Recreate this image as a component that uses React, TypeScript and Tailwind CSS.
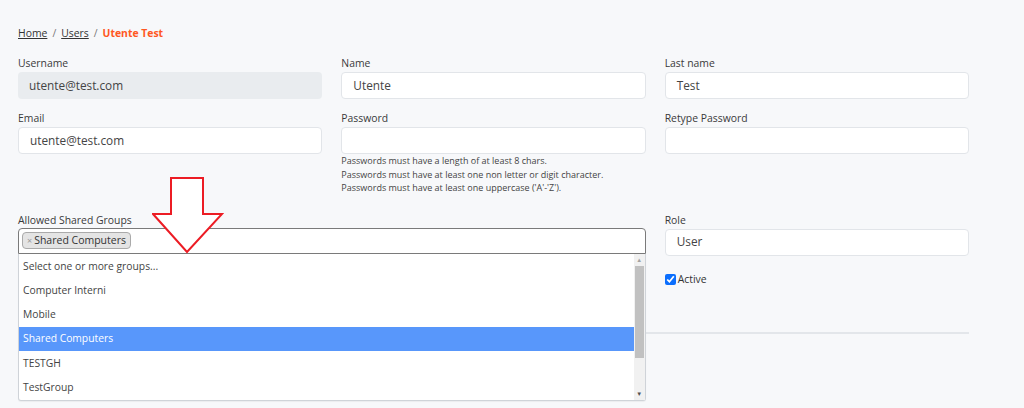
import React from "react";

const groups = ["Select one or more groups...", "Computer Interni", "Mobile", "Shared Computers", "TESTGH", "TestGroup"];

function Campo({ label, value, grigio }: { label: string; value?: string; grigio?: boolean }) {
  return (
    <div className="flex flex-col">
      <label className="text-[10.4px] leading-[14px] text-[#3a3a3a] mb-[2px]">{label}</label>
      <div
        className={
          "h-[27px] rounded-[4px] px-[11px] flex items-center text-[11.8px] text-[#444] " +
          (grigio ? "bg-[#e9ecef]" : "bg-white border border-[#e2e5e9]")
        }
      >
        {value}
      </div>
    </div>
  );
}

function Freccia() {
  return (
    <svg className="absolute left-[152px] top-[177px]" width="72" height="78" viewBox="0 0 72 78">
      <polygon points="19,1 51,1 51,37 70,37 35,75 1,37 19,37" fill="white" stroke="#ec1c24" strokeWidth="2" />
    </svg>
  );
}

export default function App() {
  return (
    <div className="relative h-[408px] w-full overflow-hidden bg-[#f7f8fa] font-['Open_Sans',sans-serif]">
      <div className="w-[951px] ml-[18px] pt-[26px]">
        <nav className="text-[10.4px] leading-[14px] text-[#333] flex gap-[5px]">
          <span className="underline">Home</span>
          <span className="text-[#777]">/</span>
          <span className="underline">Users</span>
          <span className="text-[#777]">/</span>
          <span className="font-bold text-[#ff5722]">Utente Test</span>
        </nav>

        <div className="grid grid-cols-3 gap-x-[19px] mt-[16px]">
          <Campo label="Username" value="utente@test.com" grigio />
          <Campo label="Name" value="Utente" />
          <Campo label="Last name" value="Test" />
        </div>

        <div className="grid grid-cols-3 gap-x-[19px] mt-[12px]">
          <Campo label="Email" value="utente@test.com" />
          <div className="flex flex-col">
            <Campo label="Password" />
            <div className="text-[9px] leading-[13.5px] text-[#444]">
              <p>Passwords must have a length of at least 8 chars.</p>
              <p>Passwords must have at least one non letter or digit character.</p>
              <p>Passwords must have at least one uppercase ('A'-'Z').</p>
            </div>
          </div>
          <Campo label="Retype Password" />
        </div>

        <div className="grid grid-cols-3 gap-x-[19px] mt-[18px]">
          <div className="col-span-2 flex flex-col relative">
            <label className="text-[10.4px] leading-[14px] text-[#3a3a3a] mb-[1px]">Allowed Shared Groups</label>
            <div className="h-[26px] bg-white border border-[#7a7a7a] rounded-t-[4px] flex items-center px-[3px]">
              <span className="flex items-center h-[17px] px-[4px] bg-[#e4e4e4] border border-[#aaa] rounded-[4px] text-[10.5px] text-[#333]">
                <span className="text-[#999] text-[9px] mr-[2px]">×</span>Shared Computers
              </span>
            </div>
            <div className="absolute left-0 right-0 top-[41px] h-[147px] bg-white border border-[#cfd3d8] border-t-0 rounded-b-[3px] flex z-10 shadow-[0_1px_1px_rgba(0,0,0,0.05)]">
              <ul className="flex-1 pt-[1px]">
                {groups.map((g) => (
                  <li
                    key={g}
                    className={
                      "h-[24.2px] flex items-center pl-[4px] text-[10.3px] " +
                      (g === "Shared Computers" ? "bg-[#5897fb] text-white" : "text-[#444]")
                    }
                  >
                    {g}
                  </li>
                ))}
              </ul>
              <div className="w-[11px] bg-[#f1f1f1] flex flex-col items-center">
                <span className="h-[12px] text-[6px] leading-[12px] text-[#a3a3a3]">▲</span>
                <div className="w-[9px] h-[92px] bg-[#c1c1c1]"></div>
                <div className="flex-1"></div>
                <span className="h-[12px] text-[6px] leading-[12px] text-[#505050]">▼</span>
              </div>
            </div>
          </div>
          <div className="flex flex-col">
            <Campo label="Role" value="User" />
            <label className="flex items-center gap-[2px] mt-[16px] text-[10.4px] text-[#333]">
              <input type="checkbox" defaultChecked className="w-[11px] h-[11px] accent-[#0b6efd] m-0" />
              Active
            </label>
          </div>
        </div>

        <div className="mt-[45px] border-t-2 border-[#e3e6ea]"></div>
      </div>
      <Freccia />
    </div>
  );
}
